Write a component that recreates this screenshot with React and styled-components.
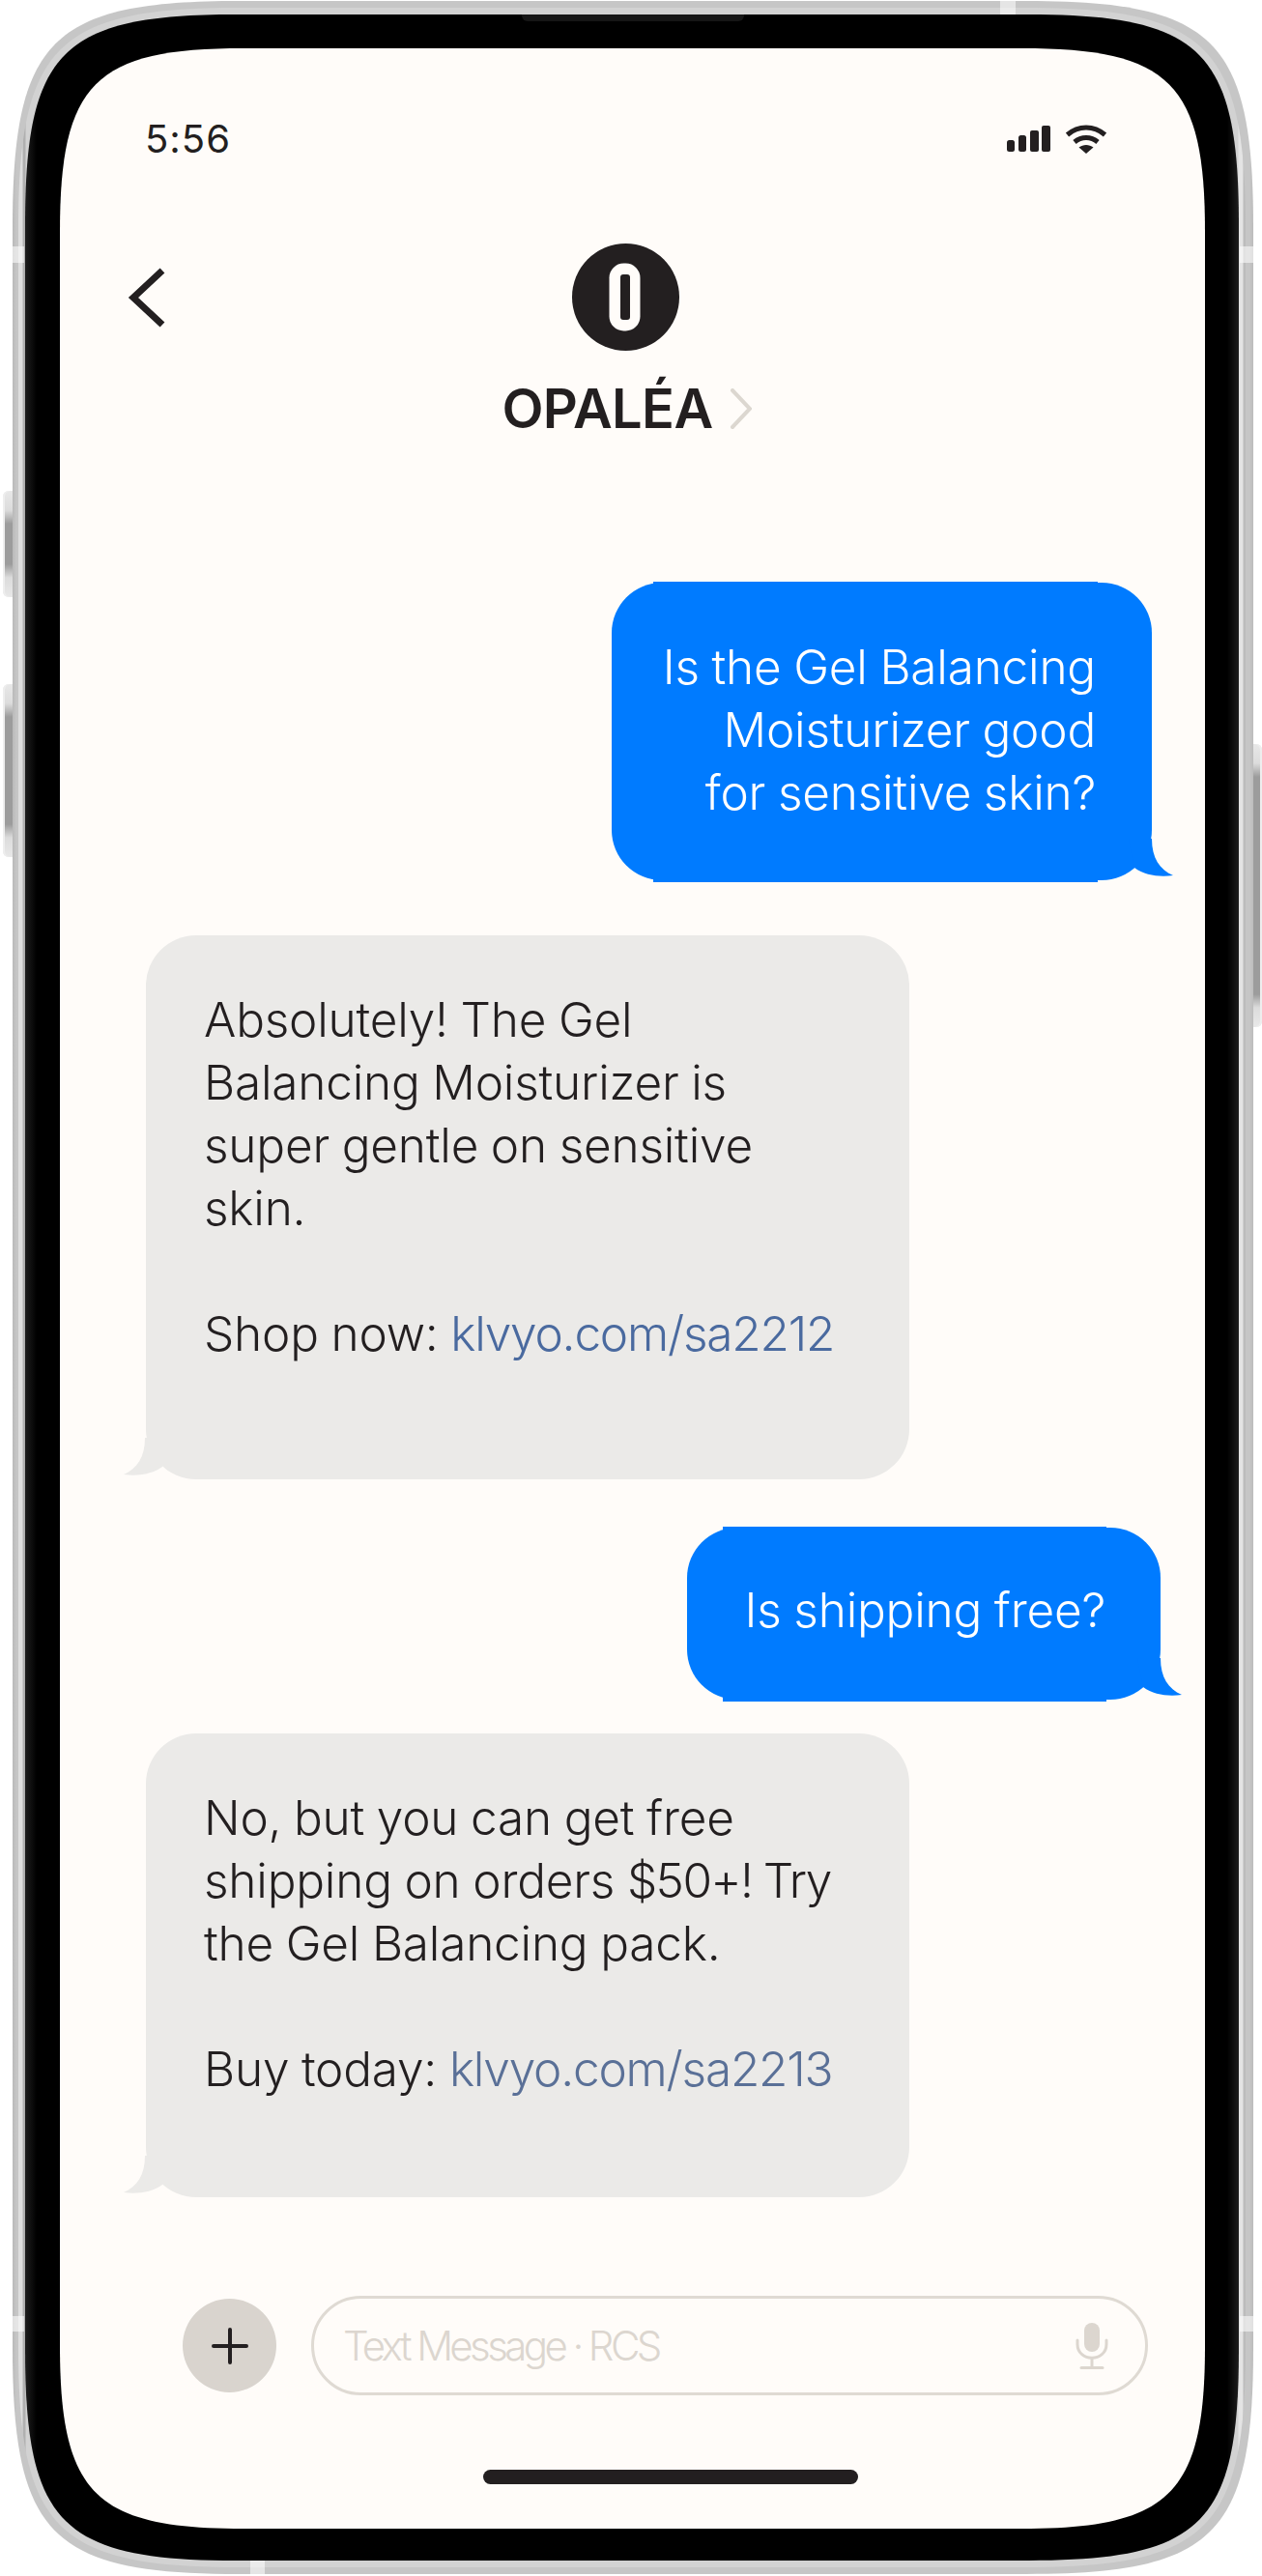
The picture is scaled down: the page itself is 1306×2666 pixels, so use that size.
import React from "react";
import styled, { createGlobalStyle } from "styled-components";

const GlobalStyle = createGlobalStyle`
  html, body { margin: 0; padding: 0; background: #fff; }
  body { font-family: Inter, "Liberation Sans", sans-serif; color: #231f20; }
`;

const corner = (w, h, R, a) =>
  `path('M0 ${R} C0 ${a} ${a} 0 ${R} 0 L${w - R} 0 C${w - a} 0 ${w} ${a} ${w} ${R} L${w} ${h - R} C${w} ${h - a} ${w - a} ${h} ${w - R} ${h} L${R} ${h} C${a} ${h} 0 ${h - a} 0 ${h - R} Z')`;

const Stage = styled.div`
  width: 1306px;
  height: 2666px;
  padding: 1px 9px 2px 13px;
  box-sizing: border-box;
  position: relative;
  overflow: hidden;
`;

const Frame = styled.div`
  width: 1284px;
  height: 2663px;
  box-sizing: border-box;
  padding: 7px 8px 7px 6px;
  background: linear-gradient(90deg, #b9b9b9, #c6c6c6 4px, #c6c6c6 calc(100% - 4px), #bcbcbc);
  clip-path: ${corner(1284, 2663, 235, 40)};
`;

const Rim = styled.div`
  width: 1270px;
  height: 2649px;
  box-sizing: border-box;
  padding: 7px;
  background: linear-gradient(90deg, #dedede, #dedede 4px, #b0b0b0 5px, #b0b0b0 7px, #d2d2d2 8px, #d2d2d2 calc(100% - 8px), #e4e4e4 calc(100% - 7px), #e4e4e4 calc(100% - 3px), #bcbcbc calc(100% - 2px));
  clip-path: ${corner(1270, 2649, 228, 40)};
`;

const Bezel = styled.div`
  width: 1256px;
  height: 2635px;
  box-sizing: border-box;
  padding: 35px 35px 33px 36px;
  background: linear-gradient(90deg, #1e1e1e, #000 12px, #000 calc(100% - 12px), #1e1e1e);
  clip-path: ${corner(1256, 2635, 218, 38)};
`;

const Speaker = styled.i`
  position: absolute;
  display: block;
  left: 540px;
  top: 15px;
  width: 230px;
  height: 7px;
  border-radius: 0 0 6px 6px;
  background: #161616;
`;

const Screen = styled.main`
  width: 1185px;
  height: 2567px;
  background: #fffcf9;
  display: flex;
  flex-direction: column;
  clip-path: ${corner(1185, 2567, 190, 36)};
`;

const Band = styled.i`
  position: absolute;
  display: block;
  background: rgba(255, 255, 255, 0.55);
  left: ${(p) => p.$left}px;
  top: ${(p) => p.$top}px;
  width: ${(p) => p.$w}px;
  height: ${(p) => p.$h}px;
`;

const SideKey = styled.i`
  position: absolute;
  display: block;
  left: ${(p) => p.$left}px;
  top: ${(p) => p.$top}px;
  width: ${(p) => p.$w}px;
  height: ${(p) => p.$h}px;
  border-radius: ${(p) => (p.$right ? "0 6px 6px 0" : "6px 0 0 6px")};
  background: linear-gradient(180deg, #e8e8e8 0, #dcdcdc 20px, #9c9c9c 34px, #9c9c9c calc(100% - 34px), #dcdcdc calc(100% - 20px), #e8e8e8 100%);
  box-shadow: ${(p) => (p.$right ? "inset -2px 0 0 #eee" : "inset 2px 0 0 #eee")};
`;

const StatusBar = styled.header`
  height: 35px;
  margin-top: 76px;
  padding: 0 101px 0 88px;
  display: flex;
  align-items: center;
  justify-content: space-between;
`;

const Time = styled.span`
  font-size: 40px;
  font-weight: 400;
  letter-spacing: 1px;
  line-height: 35px;
  color: #231f20;
`;

const StatusIcons = styled.div`
  display: flex;
  align-items: center;
  gap: 15px;
`;

const Header = styled.div`
  margin-top: 91px;
  padding: 0 125px 0 70px;
  display: grid;
  grid-template-columns: 40px 1fr;
`;

const Back = styled.svg`
  width: 39px;
  height: 62px;
  margin-top: 25px;
`;

const Brand = styled.div`
  display: flex;
  flex-direction: column;
  align-items: center;
`;

const NameRow = styled.div`
  display: flex;
  align-items: center;
  gap: 18px;
  margin-top: 26px;
  margin-left: 3px;
`;

const Name = styled.span`
  font-size: 56px;
  font-weight: 600;
  letter-spacing: -0.6px;
  line-height: 68px;
  color: #231f20;
`;

const Thread = styled.section`
  display: flex;
  flex-direction: column;
  margin-top: 146px;
  flex: 1;
`;

const Bubble = styled.div`
  position: relative;
  box-sizing: border-box;
  width: ${(p) => p.$width}px;
  margin-top: ${(p) => p.$gap || 0}px;
  padding: ${(p) => p.$pad};
  border-radius: 52px;
  font-size: 49.5px;
  font-weight: 300;
  line-height: 65px;
  letter-spacing: -0.2px;
  word-spacing: -1px;
  white-space: nowrap;
  background: ${(p) => (p.$sent ? "#007bff" : "#ebeae8")};
  color: ${(p) => (p.$sent ? "#fff" : "#231f20")};
  text-align: ${(p) => (p.$sent ? "right" : "left")};
  margin-left: ${(p) => (p.$sent ? "auto" : "89px")};
  margin-right: ${(p) => (p.$sent ? `${p.$right}px` : "auto")};
  &::before {
    content: "";
    position: absolute;
    top: -1px;
    bottom: -2px;
    left: ${(p) => p.$step || 43}px;
    right: 56px;
    background: inherit;
    z-index: 0;
    display: ${(p) => (p.$sent ? "block" : "none")};
  }
`;

const BubbleText = styled.div`
  position: relative;
  z-index: 1;
`;

const Tail = styled.svg`
  position: absolute;
  bottom: 3px;
  width: 48px;
  height: 40px;
  ${(p) => (p.$sent ? "right: -24px;" : "left: -25px; transform: scaleX(-1);")}
`;

const Link = styled.span`
  color: ${(p) => p.$color};
  letter-spacing: -1.2px;
`;

const Tight = styled.span`
  letter-spacing: -1.6px;
`;

const Composer = styled.form`
  height: 103px;
  margin-bottom: 77px;
  padding: 0 59px 0 127px;
  display: flex;
  align-items: center;
  gap: 36px;
`;

const PlusButton = styled.div`
  width: 97px;
  height: 97px;
  flex: none;
  border-radius: 50%;
  background: #d9d4ce;
  display: flex;
  align-items: center;
  justify-content: center;
`;

const Field = styled.div`
  flex: 1;
  height: 103px;
  box-sizing: border-box;
  border: 3px solid #dfdad3;
  border-radius: 52px;
  padding: 0 38px 0 30px;
  display: flex;
  align-items: center;
  justify-content: space-between;
`;

const Placeholder = styled.span`
  font-size: 42px;
  font-weight: 300;
  letter-spacing: -3.6px;
  color: #dcd6cf;
`;

const HomeBar = styled.div`
  width: 388px;
  height: 15px;
  flex: none;
  border-radius: 8px;
  background: #231f20;
  margin: 0 0 46px 438px;
`;

const tailPath = "M24 0 C24 20 32 32 46 38 C32 40 17 38 6 30 L0 0 Z";

const TailShape = ({ sent, color }) => (
  <Tail $sent={sent} viewBox="0 0 48 40">
    <path d={tailPath} fill={color} />
  </Tail>
);

export default function App() {
  return (
    <>
      <GlobalStyle />
      <Stage>
        <SideKey $left={3} $top={508} $w={10} $h={110} />
        <SideKey $left={3} $top={708} $w={10} $h={179} />
        <SideKey $right $left={1297} $top={770} $w={9} $h={293} />
        <Frame>
          <Rim>
            <Bezel>
              <Screen>
                <StatusBar>
                  <Time>5:56</Time>
                  <StatusIcons>
                    <svg width="45" height="27" viewBox="0 0 45 27">
                      <rect x="0" y="15" width="8" height="12" rx="2.5" fill="#231f20" />
                      <rect x="12" y="10" width="8" height="17" rx="2.5" fill="#231f20" />
                      <rect x="24" y="5" width="9" height="22" rx="2" fill="#231f20" />
                      <rect x="36" y="0" width="9" height="27" rx="2" fill="#231f20" />
                    </svg>
                    <svg width="44" height="32" viewBox="0 0 44 32">
                      <path d="M2.5 11.5 C14 1.5 30 1.5 41.5 11.5" fill="none" stroke="#231f20" strokeWidth="5" />
                      <path d="M10 19 C17 13 27 13 34 19" fill="none" stroke="#231f20" strokeWidth="5" />
                      <path d="M22 31 L14.5 24.5 C19 21 25 21 29.5 24.5 Z" fill="#231f20" />
                    </svg>
                  </StatusIcons>
                </StatusBar>
                <Header>
                  <Back viewBox="0 0 39 62">
                    <path d="M36 3 L6 31 L36 59" fill="none" stroke="#231f20" strokeWidth="7" />
                  </Back>
                  <Brand>
                    <svg width="111" height="111" viewBox="0 0 111 111">
                      <circle cx="55.5" cy="55.5" r="55.5" fill="#231f20" />
                      <rect x="38.5" y="20.5" width="32" height="70" rx="15" fill="#fffcf9" />
                      <rect x="50" y="32" width="10" height="47" rx="3" fill="#231f20" />
                    </svg>
                    <NameRow>
                      <Name>OPALÉA</Name>
                      <svg width="22" height="42" viewBox="0 0 22 42">
                        <path d="M2 2 L20 21 L2 40" fill="none" stroke="#dcd7d0" strokeWidth="4" strokeLinecap="round" />
                      </svg>
                    </NameRow>
                  </Brand>
                </Header>
                <Thread>
                  <Bubble $sent $width={559} $right={55} $pad="55px 58px 58px 0">
                    <BubbleText>
                      Is the Gel Balancing<br />Moisturizer good<br />for sensitive skin?
                    </BubbleText>
                    <TailShape sent color="#007bff" />
                  </Bubble>
                  <Bubble $width={790} $gap={57} $pad="55px 0 118px 60px">
                    <BubbleText>
                      Absolutely! The Gel<br />Balancing Moisturizer is<br />super gentle on sensitive<br />skin.<br /><br />
                      Shop now: <Link $color="#4a6a9f">klvyo.com/sa2212</Link>
                    </BubbleText>
                    <TailShape color="#ebeae8" />
                  </Bubble>
                  <Bubble $sent $width={490} $right={46} $step={37} $gap={50} $pad="53px 57px 60px 0">
                    <BubbleText>Is shipping free?</BubbleText>
                    <TailShape sent color="#007bff" />
                  </Bubble>
                  <Bubble $width={790} $gap={35} $pad="55px 0 100px 60px">
                    <BubbleText>
                      No, but you can get free<br />shipping on orders <Tight>$50+! Try</Tight><br />the Gel Balancing pack.<br /><br />
                      Buy today: <Link $color="#5a7097">klvyo.com/sa2213</Link>
                    </BubbleText>
                    <TailShape color="#ebeae8" />
                  </Bubble>
                </Thread>
                <Composer>
                  <PlusButton>
                    <svg width="38" height="38" viewBox="0 0 38 38">
                      <path d="M19 2 V36 M2 19 H36" stroke="#231f20" strokeWidth="4" strokeLinecap="round" />
                    </svg>
                  </PlusButton>
                  <Field>
                    <Placeholder>Text Message · RCS</Placeholder>
                    <svg width="34" height="48" viewBox="0 0 34 48">
                      <rect x="9" y="0" width="16" height="30" rx="8" fill="#dcd6cf" />
                      <path d="M2 18 V22 C2 41 32 41 32 22 V18" fill="none" stroke="#dcd6cf" strokeWidth="3" strokeLinecap="round" />
                      <path d="M17 37 V46" stroke="#dcd6cf" strokeWidth="3" />
                      <path d="M6 46.5 H28" stroke="#dcd6cf" strokeWidth="3" strokeLinecap="round" />
                    </svg>
                  </Field>
                </Composer>
                <HomeBar />
              </Screen>
            </Bezel>
          </Rim>
        </Frame>
        <Speaker />
        <Band $left={13} $top={255} $w={12} $h={17} />
        <Band $left={1283} $top={255} $w={14} $h={17} />
        <Band $left={13} $top={2397} $w={12} $h={16} />
        <Band $left={1283} $top={2397} $w={14} $h={16} />
        <Band $left={1035} $top={1} $w={16} $h={14} />
        <Band $left={259} $top={2650} $w={15} $h={15} />
      </Stage>
    </>
  );
}
